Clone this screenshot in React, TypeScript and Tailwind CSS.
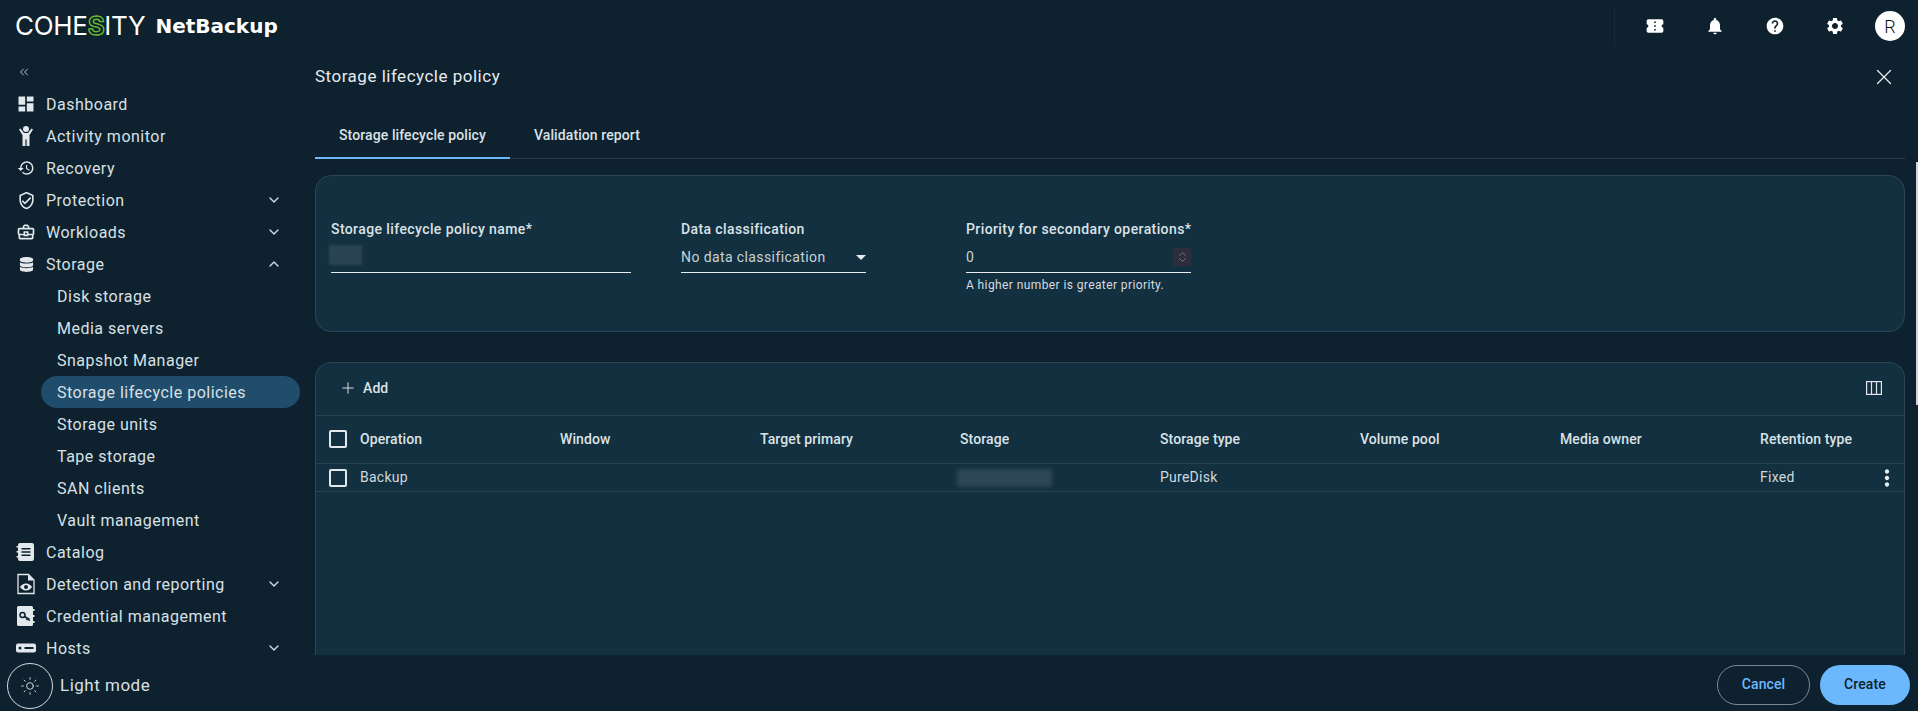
import React from 'react';
import { ChevronDown, ChevronUp, ChevronsLeft, Plus, Sun, X } from 'lucide-react';
import {
  MdDashboard,
  MdHistory,
  MdOutlineVerifiedUser,
  MdOutlineBusinessCenter,
  MdConfirmationNumber,
  MdNotifications,
  MdHelp,
  MdSettings,
  MdMoreVert,
} from 'react-icons/md';
import { FaDatabase } from 'react-icons/fa';

function ActivityIcon() {
  return (
    <svg width="16" height="22" viewBox="0 0 16 22">
      <circle cx="8" cy="4" r="3" fill="#e2e8ec" />
      <path fill="#e2e8ec" d="M1 4.500L2.500 3.500L6 8h4L13.500 3.500L15 4.500L11.500 10V21H8.600V14.500H7.400V21H4.500V10z" />
    </svg>
  );
}

function CatalogIcon() {
  return (
    <svg width="20" height="20" viewBox="0 0 20 20">
      <path fill="#e2e8ec" fillRule="evenodd" d="M4 1h12a2 2 0 0 1 2 2v14a2 2 0 0 1-2 2H4a2 2 0 0 1-2-2V3a2 2 0 0 1 2-2zm1.5 5v1.4h9V6zm0 3.3v1.4h9V9.3zm0 3.3V14h9v-1.4z" />
      <path fill="#e2e8ec" d="M0.5 4h2v1.5h-2zM0.5 9h2v1.5h-2zM0.5 14h2v1.5h-2z" />
    </svg>
  );
}

function DetectionIcon() {
  return (
    <svg width="20" height="22" viewBox="0 0 20 22">
      <path fill="none" stroke="#e2e8ec" strokeWidth="1.3" d="M2 1.5h10.5L18 7v13.5H2z" />
      <path fill="#e2e8ec" d="M12 1.5V7.5h6z" />
      <path fill="#e2e8ec" d="M10 10.5c-3 0-5 2-6 3.5 1 1.5 3 3.5 6 3.5s5-2 6-3.5c-1-1.5-3-3.5-6-3.5z" />
      <circle cx="10" cy="14" r="2" fill="#0d212e" />
    </svg>
  );
}

function CredentialIcon() {
  return (
    <svg width="20" height="20" viewBox="0 0 20 20">
      <path fill="#e2e8ec" d="M2.5 0h13A1.5 1.5 0 0 1 17 1.5V3h1.5v2H17v4h1.5v2H17v4h1.5v2H17v1.5a1.5 1.5 0 0 1-1.5 1.5h-13A1.5 1.5 0 0 1 1 18.500v-17A1.500 1.500 0 0 1 2.500 0z" />
      <circle cx="6.500" cy="9" r="2.500" fill="none" stroke="#0d212e" strokeWidth="1.500" />
      <path fill="none" stroke="#0d212e" strokeWidth="1.600" d="M8.500 10.500l5 3M11.500 12.500l-1 1.500M13.500 13.500l-.8 1.200" />
    </svg>
  );
}

function HostsIcon() {
  return (
    <svg width="20" height="10" viewBox="0 0 20 10">
      <rect x="0" y="0.500" width="20" height="9" rx="2" fill="#e2e8ec" />
      <circle cx="4" cy="5" r="1.500" fill="#0d212e" />
      <rect x="8.500" y="4" width="9" height="2" fill="#0d212e" />
    </svg>
  );
}

function ColumnsIcon() {
  return (
    <svg width="16" height="14" viewBox="0 0 16 14" fill="none" stroke="#dfe5e9" strokeWidth="1.200">
      <rect x="0.600" y="0.600" width="14.800" height="12.800" />
      <path d="M5.500 0.600v12.800M10.500 0.600v12.800" />
    </svg>
  );
}

type NavItem = {
  label: string;
  icon?: React.ReactNode;
  chevron?: 'up' | 'down';
  sub?: boolean;
  active?: boolean;
};

const navItems: NavItem[] = [
  { label: 'Dashboard', icon: <MdDashboard size={20} /> },
  { label: 'Activity monitor', icon: <ActivityIcon /> },
  { label: 'Recovery', icon: <MdHistory size={18} /> },
  { label: 'Protection', icon: <MdOutlineVerifiedUser size={19} />, chevron: 'down' },
  { label: 'Workloads', icon: <MdOutlineBusinessCenter size={20} />, chevron: 'down' },
  { label: 'Storage', icon: <FaDatabase size={15} />, chevron: 'up' },
  { label: 'Disk storage', sub: true },
  { label: 'Media servers', sub: true },
  { label: 'Snapshot Manager', sub: true },
  { label: 'Storage lifecycle policies', sub: true, active: true },
  { label: 'Storage units', sub: true },
  { label: 'Tape storage', sub: true },
  { label: 'SAN clients', sub: true },
  { label: 'Vault management', sub: true },
  { label: 'Catalog', icon: <CatalogIcon /> },
  { label: 'Detection and reporting', icon: <DetectionIcon />, chevron: 'down' },
  { label: 'Credential management', icon: <CredentialIcon /> },
  { label: 'Hosts', icon: <HostsIcon />, chevron: 'down' },
];

const columns = ['Window', 'Target primary', 'Storage', 'Storage type', 'Volume pool', 'Media owner', 'Retention type'];

function Checkbox() {
  return <span className="block h-[18px] w-[18px] rounded-[2px] border-2 border-[#e3e8ec]" />;
}

function NavRow({ item }: { item: NavItem }) {
  if (item.sub) {
    return (
      <div
        className={`ml-[41px] flex h-[32px] w-[259px] shrink-0 items-center rounded-full pl-[16px] ${
          item.active ? 'bg-[#1f4d6b]' : ''
        }`}
      >
        <span className="mt-[2px]">{item.label}</span>
      </div>
    );
  }
  return (
    <div className="flex h-[32px] shrink-0 items-center">
      <span className="flex w-[46px] shrink-0 justify-center pl-[6px] text-[#e2e8ec]">{item.icon}</span>
      <span className="mt-[2px]">{item.label}</span>
      {item.chevron === 'down' && <ChevronDown size={16} className="ml-auto mr-[33px]" />}
      {item.chevron === 'up' && <ChevronUp size={16} className="ml-auto mr-[33px]" />}
    </div>
  );
}

export default function App() {
  return (
    <div className="relative flex h-[711px] w-[1918px] flex-col overflow-hidden bg-[#0d212e] font-['Roboto',sans-serif] text-[#dbe2e7]">
      <header className="flex h-[56px] shrink-0 items-center pb-[4px] text-white">
        <div className="ml-[15px] flex items-center font-['Inter',sans-serif] text-[26px] leading-none font-normal tracking-[-0.3px]">
          COHE<span className="font-bold text-transparent [-webkit-text-stroke:1.3px_#6cbf2c]">S</span>ITY
        </div>
        <div className="ml-[10px] font-['DejaVu_Sans',sans-serif] text-[20px] leading-none font-bold">NetBackup</div>
        <div className="ml-auto flex h-[41px] items-center border-l border-[#1a2c3a] pr-[13px] pl-[10px]">
          <span className="flex w-[60px] justify-center"><MdConfirmationNumber size={20} /></span>
          <span className="flex w-[60px] justify-center"><MdNotifications size={20} /></span>
          <span className="flex w-[60px] justify-center"><MdHelp size={20} /></span>
          <span className="flex w-[60px] justify-center"><MdSettings size={20} /></span>
          <span className="ml-[10px] flex h-[30px] w-[30px] items-center justify-center rounded-full bg-white text-[18px] font-light text-[#111]">R</span>
        </div>
      </header>

      <div className="flex min-h-0 flex-1">
        <aside className="flex min-h-0 w-[315px] shrink-0 flex-col text-[16px] tracking-[0.5px] text-[#d9e0e5]">
          <div className="flex h-[32px] shrink-0 items-center pl-[17px]">
            <ChevronsLeft size={14} strokeWidth={1.5} />
          </div>
          {navItems.map((item) => (
            <NavRow key={item.label} item={item} />
          ))}
        </aside>

        <main className="flex min-w-0 flex-1 flex-col pr-[13px]">
          <div className="flex h-[42px] shrink-0 items-center justify-between pr-[8px] text-[17px] tracking-[0.5px] text-[#e6ebee]">
            <span>Storage lifecycle policy</span>
            <X size={26} strokeWidth={1.2} />
          </div>
          <div className="flex h-[61px] shrink-0 items-end border-b border-[#2a3a46] text-[14px] font-medium tracking-[0.1px]">
            <div className="-mb-px flex h-[46px] w-[195px] items-center justify-center border-b-2 border-[#6cb8ff]">Storage lifecycle policy</div>
            <div className="flex h-[46px] w-[154px] items-center justify-center">Validation report</div>
          </div>

          <section className="mt-[16px] flex h-[157px] shrink-0 rounded-[16px] border border-[#2b4556] bg-[#12303f] pt-[43px] pl-[15px] text-[14px] tracking-[0.4px]">
            <div className="w-[300px]">
              <div className="h-[20px] leading-[20px] font-medium whitespace-nowrap">Storage lifecycle policy name*</div>
              <div className="h-[34px] border-b border-[#e8ecef] pt-[6px]">
                <div className="-ml-[2px] h-[20px] w-[33px] bg-[#2b4453] blur-[1px]" />
              </div>
            </div>
            <div className="ml-[50px] w-[185px]">
              <div className="h-[20px] leading-[20px] font-medium whitespace-nowrap">Data classification</div>
              <div className="flex h-[34px] items-center justify-between border-b border-[#e8ecef] pt-[3px] text-[#c9d2d8]">
                <span>No data classification</span>
                <span className="h-0 w-0 border-x-[5px] border-t-[5px] border-x-transparent border-t-[#e8ecef]" />
              </div>
            </div>
            <div className="ml-[100px] w-[225px]">
              <div className="h-[20px] leading-[20px] font-medium whitespace-nowrap">Priority for secondary operations*</div>
              <div className="flex h-[34px] items-center justify-between border-b border-[#e8ecef] pt-[3px] text-[#c9d2d8]">
                <span>0</span>
                <span className="flex h-[18px] w-[18px] flex-col items-center justify-center bg-[#2d2d3c] text-[#8f8f9a]">
                  <ChevronUp size={13} strokeWidth={1.4} className="-mb-[3px]" />
                  <ChevronDown size={13} strokeWidth={1.4} className="-mt-[3px]" />
                </span>
              </div>
              <div className="mt-[3px] text-[12px] leading-[18px] tracking-[0.4px] text-[#d5dce1]">A higher number is greater priority.</div>
            </div>
          </section>

          <section className="mt-[30px] min-h-0 flex-1 rounded-t-[16px] border border-b-0 border-[#2b4556] bg-[#12303f] text-[14px] tracking-[0.1px]">
            <div className="flex h-[53px] items-center justify-between border-b border-[#284454] pr-[22px] pb-[2px] pl-[23px]">
              <div className="flex items-center gap-[6px] font-medium">
                <Plus size={18} strokeWidth={1.3} />
                <span>Add</span>
              </div>
              <ColumnsIcon />
            </div>
            <div className="flex h-[48px] items-center border-b border-[#284454] pb-[1px] pl-[13px] font-medium">
              <div className="flex w-[231px] shrink-0 items-center gap-[13px]">
                <Checkbox />
                <span>Operation</span>
              </div>
              {columns.map((col) => (
                <div key={col} className="w-[200px] shrink-0">{col}</div>
              ))}
            </div>
            <div className="relative flex h-[28px] items-center border-b border-[#284454] pl-[13px] tracking-[0.25px] text-[#d0d8de]">
              <div className="flex w-[231px] shrink-0 items-center gap-[13px]">
                <Checkbox />
                <span>Backup</span>
              </div>
              <div className="w-[200px] shrink-0" />
              <div className="w-[200px] shrink-0" />
              <div className="w-[200px] shrink-0">
                <div className="-ml-[3px] h-[18px] w-[95px] bg-[#2e4756] blur-[2px]" />
              </div>
              <div className="w-[200px] shrink-0">PureDisk</div>
              <div className="w-[200px] shrink-0" />
              <div className="w-[200px] shrink-0" />
              <div className="w-[114px] shrink-0">Fixed</div>
              <MdMoreVert size={26} className="text-[#e8ecef]" />
            </div>
          </section>
        </main>
      </div>

      <footer className="flex h-[56px] shrink-0 items-center">
        <div className="mt-[6px] ml-[7px] flex items-center">
          <div className="flex h-[46px] w-[46px] items-center justify-center rounded-full border border-[#d5dce1]">
            <Sun size={20} strokeWidth={1.1} />
          </div>
          <span className="ml-[7px] text-[17px] tracking-[0.5px] text-[#d9e0e5]">Light mode</span>
        </div>
        <div className="mt-[3px] ml-auto flex items-center gap-[10px] pr-[8px] text-[14px] font-medium tracking-[0.1px]">
          <button className="h-[40px] w-[93px] rounded-full border border-[#7d8a94] text-[#6cb8ff]">Cancel</button>
          <button className="h-[40px] w-[90px] rounded-full bg-[#6cb8ff] text-[#0d212e]">Create</button>
        </div>
      </footer>

      {/* scrollbar thumb */}
      <div className="absolute top-[162px] right-0 h-[243px] w-[2px] bg-[#cfd6db]" />
    </div>
  );
}
